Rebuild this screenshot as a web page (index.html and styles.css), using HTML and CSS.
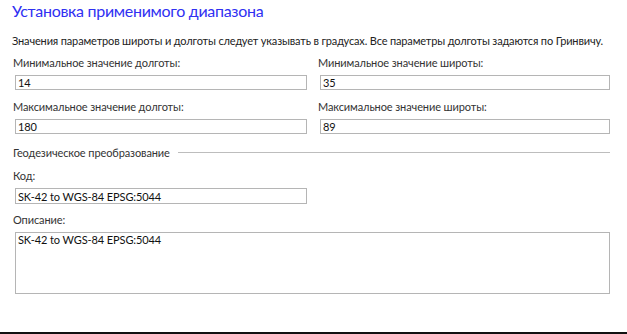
FILE: index.html
```html
<!DOCTYPE html>
<html lang="ru">

<head>
    <meta charset="UTF-8">
    <title>Установка применимого диапазона</title>
    <link rel="stylesheet" href="styles.css">
</head>

<body>
    <section class="page">
        <h1 class="title">Установка применимого диапазона</h1>
        <p class="hint">Значения параметров широты и долготы следует указывать в градусах. Все параметры долготы задаются по Гринвичу.</p>

        <div class="grid">
            <div class="field">
                <label class="label">Минимальное значение долготы:</label>
                <input type="text" class="box" value="14">
            </div>
            <div class="field">
                <label class="label">Минимальное значение широты:</label>
                <input type="text" class="box" value="35">
            </div>
            <div class="field">
                <label class="label">Максимальное значение долготы:</label>
                <input type="text" class="box" value="180">
            </div>
            <div class="field">
                <label class="label">Максимальное значение широты:</label>
                <input type="text" class="box" value="89">
            </div>
        </div>

        <div class="group">
            <span class="groupTitle">Геодезическое преобразование</span>
            <span class="groupLine"></span>
        </div>

        <div class="field half">
            <label class="label">Код:</label>
            <input type="text" class="box" value="SK-42 to WGS-84 EPSG:5044">
        </div>

        <div class="field wide">
            <label class="label">Описание:</label>
            <textarea class="box area">SK-42 to WGS-84 EPSG:5044</textarea>
        </div>
    </section>

    <div class="bottomBar"></div>
</body>

</html>
```
FILE: styles.css
```css
* {
    box-sizing: border-box;
}

body {
    margin: 0;
    width: 627px;
    height: 334px;
    background: #fff;
    font-family: Lato, "Noto Sans", sans-serif;
    font-size: 11px;
    letter-spacing: -0.1px;
    color: #222;
    display: flex;
    flex-direction: column;
    overflow: hidden;
}

.page {
    flex: 1;
    padding: 0 17px 0 12px;
}

.title {
    margin: 0;
    height: 28px;
    font-size: 16px;
    font-weight: 400;
    letter-spacing: -0.3px;
    line-height: 22px;
    color: #3030f2;
}

.hint {
    margin: 1px 0 0;
    height: 24px;
    line-height: 24px;
    letter-spacing: -0.15px;
    white-space: nowrap;
}

.grid {
    display: grid;
    grid-template-columns: 295px 293px;
    column-gap: 10px;
    row-gap: 8px;
    margin-top: 1px;
}

.field {
    display: flex;
    flex-direction: column;
}

.label {
    height: 18px;
    line-height: 18px;
    padding-left: 1px;
    color: #333;
}

.box {
    margin: 3px 0 0 3px;
    height: 15px;
    padding: 0 2px;
    border: 1px solid #b5b5b5;
    font-family: inherit;
    font-size: 11px;
    letter-spacing: inherit;
    line-height: 13px;
    color: #111;
    outline: none;
    background: #fff;
}

.group {
    display: flex;
    align-items: center;
    gap: 8px;
    margin-top: 8px;
    height: 20px;
}

.groupTitle {
    color: #333;
    padding-left: 1px;
}

.groupLine {
    flex: 1;
    border-top: 1px solid #bdbdbd;
}

.half {
    width: 295px;
    margin-top: 5px;
}

.half .box {
    height: 16px;
    margin-top: 3px;
}

.wide {
    width: 598px;
    margin-top: 7px;
}

.area {
    height: 62px;
    margin-top: 3px;
    resize: none;
    padding-top: 0;
    overflow: hidden;
}

.bottomBar {
    height: 2px;
    background: #111;
}
```
